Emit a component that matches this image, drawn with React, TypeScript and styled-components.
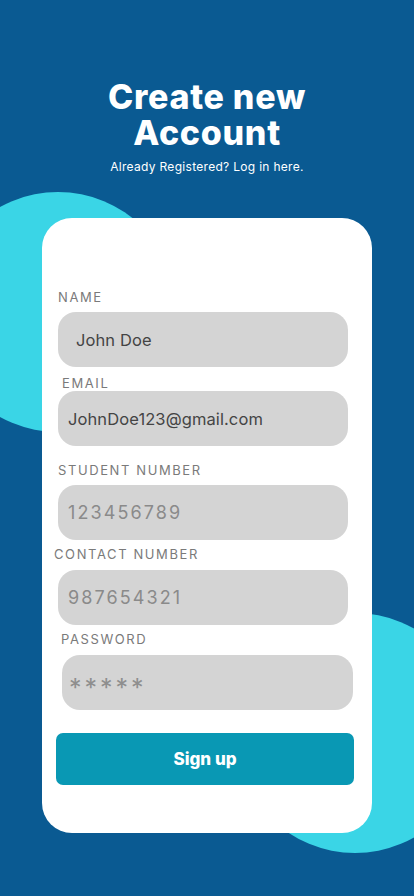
import React from "react";
import styled, { createGlobalStyle } from "styled-components";

const Global = createGlobalStyle`
  html, body { margin: 0; padding: 0; }
  body { font-family: "Inter", "Noto Sans", sans-serif; background: #0a5a92; }
  * { box-sizing: border-box; }
`;

const Screen = styled.div`
  position: relative;
  width: 414px;
  height: 896px;
  overflow: hidden;
  background: #0a5a92;
  display: flex;
  flex-direction: column;
  align-items: center;
`;

const Blob = styled.div<{ $x: number; $y: number }>`
  position: absolute;
  left: ${(p) => p.$x - 120}px;
  top: ${(p) => p.$y - 120}px;
  width: 240px;
  height: 240px;
  border-radius: 50%;
  background: #3ad5e6;
`;

const Header = styled.header`
  position: relative;
  z-index: 1;
  padding-top: 79px;
  display: flex;
  flex-direction: column;
  align-items: center;
  color: #fff;
`;

const Title = styled.h1`
  margin: 0;
  font-size: 34px;
  line-height: 36px;
  font-weight: 800;
  text-align: center;
  letter-spacing: 0.7px;
`;

const Subtitle = styled.p`
  margin: 9px 0 0;
  font-size: 12px;
  line-height: 14px;
  font-weight: 400;
  letter-spacing: 0.3px;
`;

const Card = styled.main`
  position: relative;
  z-index: 1;
  margin-top: 44px;
  width: 330px;
  height: 615px;
  align-self: flex-start;
  margin-left: 42px;
  background: #fff;
  border-radius: 30px;
  padding: 71px 0 0;
  display: flex;
  flex-direction: column;
`;

const Field = styled.div<{ $top: number }>`
  display: flex;
  flex-direction: column;
  margin-top: ${(p) => p.$top}px;
`;

const Label = styled.label<{ $left: number; $gap: number }>`
  margin-left: ${(p) => p.$left}px;
  margin-bottom: ${(p) => p.$gap}px;
  font-size: 13px;
  line-height: 16px;
  letter-spacing: 1.6px;
  color: #7a7a7a;
  text-transform: uppercase;
`;

const Input = styled.div<{ $left: number; $pad: number; $muted?: boolean; $wide?: boolean }>`
  margin-left: ${(p) => p.$left}px;
  width: ${(p) => (p.$wide ? 291 : 290)}px;
  height: 55px;
  border-radius: 18px;
  background: #d4d4d4;
  display: flex;
  align-items: center;
  padding-left: ${(p) => p.$pad}px;
  font-size: ${(p) => (p.$muted ? 18 : 16.5)}px;
  letter-spacing: ${(p) => (p.$muted ? 2.1 : 0.1)}px;
  color: ${(p) => (p.$muted ? "#8a8a8a" : "#444")};
`;

const Stars = styled.span`
  font-size: 25px;
  letter-spacing: 3px;
  line-height: 1;
  padding-top: 11px;
  color: #8e8e8e;
`;

const Button = styled.button`
  margin: 23px 0 0 14px;
  width: 298px;
  height: 52px;
  border: none;
  border-radius: 7px;
  background: #0998b4;
  color: #fff;
  font-family: inherit;
  font-size: 17px;
  font-weight: 800;
`;

const fields = [
  { label: "Name", value: "John Doe", lx: 16, gap: 7, top: 0, ix: 16, pad: 18, muted: false },
  { label: "Email", value: "JohnDoe123@gmail.com", lx: 20, gap: 0, top: 8, ix: 16, pad: 10, muted: false },
  { label: "Student Number", value: "123456789", lx: 16, gap: 7, top: 16, ix: 16, pad: 10, muted: true },
  { label: "Contact Number", value: "987654321", lx: 12, gap: 8, top: 6, ix: 16, pad: 10, muted: true },
  { label: "Password", value: "*****", lx: 19, gap: 8, top: 6, ix: 20, pad: 7, muted: true, wide: true, stars: true },
];

export default function App() {
  return (
    <Screen>
      <Global />
      <Blob $x={58} $y={312} />
      <Blob $x={355} $y={733} />
      <Header>
        <Title>
          Create new
          <br />
          Account
        </Title>
        <Subtitle>Already Registered? Log in here.</Subtitle>
      </Header>
      <Card>
        {fields.map((f) => (
          <Field key={f.label} $top={f.top}>
            <Label $left={f.lx} $gap={f.gap}>
              {f.label}
            </Label>
            <Input $left={f.ix} $pad={f.pad} $muted={f.muted} $wide={f.wide}>
              {f.stars ? <Stars>{f.value}</Stars> : f.value}
            </Input>
          </Field>
        ))}
        <Button>Sign up</Button>
      </Card>
    </Screen>
  );
}
